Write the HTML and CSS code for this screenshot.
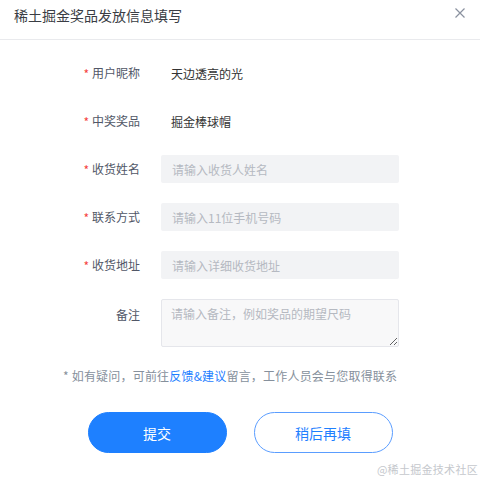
FILE: index.html
```html
<!DOCTYPE html>
<html lang="zh-CN">
<head>
<meta charset="utf-8">
<link rel="stylesheet" href="styles.css">
</head>
<body>
<div class="dialog">
  <div class="header">
    <span class="title">稀土掘金奖品发放信息填写</span>
    <svg class="close" width="10" height="10" viewBox="0 0 10 10"><path d="M0.5 0.5L9.5 9.5M9.5 0.5L0.5 9.5" stroke="#8a919f" stroke-width="1.2" fill="none"/></svg>
  </div>
  <div class="form">
    <div class="row">
      <div class="label"><span class="req">*</span>用户昵称</div>
      <div class="value">天边透亮的光</div>
    </div>
    <div class="row">
      <div class="label"><span class="req">*</span>中奖奖品</div>
      <div class="value">掘金棒球帽</div>
    </div>
    <div class="row">
      <div class="label"><span class="req">*</span>收货姓名</div>
      <input class="input" placeholder="请输入收货人姓名">
    </div>
    <div class="row">
      <div class="label"><span class="req">*</span>联系方式</div>
      <input class="input" placeholder="请输入11位手机号码">
    </div>
    <div class="row">
      <div class="label"><span class="req">*</span>收货地址</div>
      <input class="input" placeholder="请输入详细收货地址">
    </div>
    <div class="row row-top">
      <div class="label">备注</div>
      <textarea class="textarea" placeholder="请输入备注，例如奖品的期望尺码"></textarea>
    </div>
    <p class="note">* 如有疑问，可前往<a class="link">反馈&amp;建议</a>留言，工作人员会与您取得联系</p>
    <div class="actions">
      <button class="btn btn-primary">提交</button>
      <button class="btn btn-ghost">稍后再填</button>
    </div>
  </div>
  <div class="watermark">@稀土掘金技术社区</div>
</div>
</body>
</html>
```

FILE: styles.css
```css
* { box-sizing: border-box; }
html, body { margin: 0; padding: 0; background: #fff; }
body {
  font-family: "Noto Sans CJK SC", "Noto Sans", sans-serif;
  width: 480px;
  height: 480px;
  overflow: hidden;
}
.dialog { position: relative; height: 480px; }
.header {
  height: 40px;
  border-bottom: 1px solid #e9eaed;
  display: flex;
  align-items: flex-start;
  justify-content: space-between;
  padding: 5px 15px 0 14px;
}
.title {
  font-size: 14px;
  line-height: 20px;
  color: #3a3d44;
}
.close { margin-top: 3px; }
.form { padding-top: 19px; }
.row {
  display: flex;
  align-items: center;
  height: 28px;
  margin-bottom: 20px;
}
.row-top { align-items: flex-start; height: 48px; }
.label {
  width: 140px;
  text-align: right;
  font-size: 12px;
  line-height: 28px;
  color: #515767;
  margin-right: 21px;
}
.row-top .label { line-height: 32px; }
.req {
  color: #f53f3f;
  font-size: 12px;
  margin-right: 3px;
  vertical-align: -1px;
}
.value {
  font-size: 12px;
  color: #333;
  padding-left: 10px;
}
.input {
  width: 238px;
  height: 28px;
  border: none;
  outline: none;
  background: #f2f3f5;
  border-radius: 2px;
  padding: 0 11px;
  font-family: inherit;
  font-size: 12px;
  color: #333;
}
.input::placeholder, .textarea::placeholder { color: #b5b9c1; }
.textarea {
  width: 238px;
  height: 48px;
  border: 1px solid #e5e6eb;
  background: #f8f8f9;
  border-radius: 2px;
  padding: 5px 9px;
  font-family: inherit;
  font-size: 12px;
  outline: none;
  resize: both;
}
.note {
  margin: 0;
  padding-left: 63px;
  font-size: 12px;
  line-height: 18px;
  color: #86909c;
  letter-spacing: 0.2px;
}
.link { color: #1e80ff; text-decoration: none; }
.actions {
  display: flex;
  justify-content: center;
  gap: 27px;
  margin-top: 27px;
}
.btn {
  width: 139px;
  height: 41px;
  border-radius: 21px;
  font-family: inherit;
  font-size: 14px;
  cursor: pointer;
}
.btn-primary {
  background: #1e80ff;
  border: 1px solid #1e80ff;
  color: #fff;
}
.btn-ghost {
  background: #fff;
  border: 1px solid #5a9dff;
  color: #1e80ff;
}
.watermark {
  position: absolute;
  right: 2px;
  bottom: 3px;
  font-size: 11px;
  color: #c5c8cd;
  letter-spacing: 0.3px;
}
```
